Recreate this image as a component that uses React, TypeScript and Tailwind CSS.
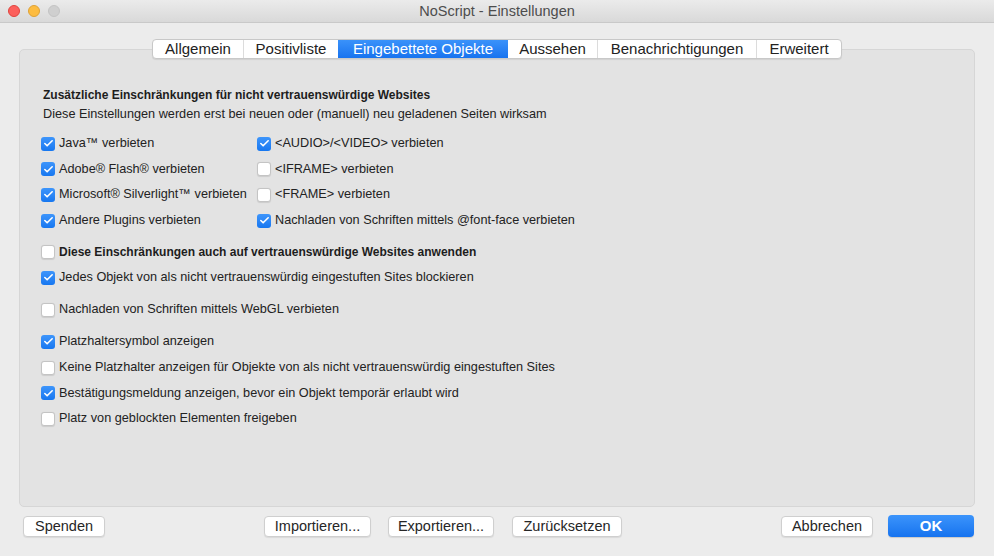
import { Check } from "lucide-react"

const font = { fontFamily: '"Liberation Sans", Arial, sans-serif' }

const tabs = [
  "Allgemein",
  "Positivliste",
  "Eingebettete Objekte",
  "Aussehen",
  "Benachrichtigungen",
  "Erweitert",
]
const tabWidths = ["w-[90px]", "w-[95px]", "w-[170px]", "w-[89px]", "w-[159px]", "w-[85px]"]

function Box({ checked }: { checked: boolean }) {
  return checked ? (
    <span className="flex h-[14px] w-[14px] shrink-0 items-center justify-center rounded-[3px] bg-gradient-to-b from-[#3d95fb] to-[#1677f0]">
      <Check className="h-[11px] w-[11px] text-white" strokeWidth={3.5} />
    </span>
  ) : (
    <span className="h-[14px] w-[14px] shrink-0 rounded-[3px] border border-[#c4c4c4] bg-white shadow-[0_0.5px_1px_rgba(0,0,0,0.1)]" />
  )
}

function Row({
  label,
  checked,
  bold,
  className,
}: {
  label: string
  checked: boolean
  bold?: boolean
  className?: string
}) {
  return (
    <div className={"flex h-[25.6px] items-center gap-[4px] " + (className ?? "")}>
      <Box checked={checked} />
      <span className={bold ? "text-[12px] font-bold text-[#1d1d1d]" : "text-[#222]"}>{label}</span>
    </div>
  )
}

function Button({ label, className }: { label: string; className?: string }) {
  return (
    <button
      className={
        "h-[21px] rounded-[4px] border border-[#cfcfcf] bg-white text-[14.5px] leading-[19px] text-[#262626] shadow-[0_1px_1px_rgba(0,0,0,0.08)] " +
        (className ?? "")
      }
    >
      {label}
    </button>
  )
}

export default function App() {
  return (
    <div className="flex h-[556px] w-[994px] flex-col bg-[#ececec] text-[12.7px]" style={font}>
      {/* title bar */}
      <div className="relative flex h-[23px] shrink-0 items-center justify-center border-b border-[#c9c9c9] bg-gradient-to-b from-[#ebebeb] to-[#d9d9d9]">
        <div className="absolute left-[8px] top-[5px] flex gap-[8px]">
          <span className="h-[12px] w-[12px] rounded-full border border-[#e0443e] bg-[#fc605c]" />
          <span className="h-[12px] w-[12px] rounded-full border border-[#dea236] bg-[#fdbc40]" />
          <span className="h-[12px] w-[12px] rounded-full border border-[#c4c4c4] bg-[#cfcfcf]" />
        </div>
        <span className="pt-[1px] text-[14.5px] text-[#4d4d4d]">NoScript - Einstellungen</span>
      </div>

      <div className="flex flex-1 flex-col px-[19px] pt-[16px]">
        {/* tabs */}
        <div className="relative z-10 flex justify-center">
          <div className="flex h-[20px] overflow-hidden rounded-[4px] border border-[#c8c8c8] bg-white text-[15px] shadow-[0_1px_1px_rgba(0,0,0,0.08)]">
            {tabs.map((t, i) => (
              <div
                key={t}
                className={
                  "flex items-center justify-center pt-[1px] " +
                  tabWidths[i] +
                  (i === 2
                    ? " bg-gradient-to-b from-[#3a92fa] to-[#1773ef] text-white"
                    : " text-[#222]") +
                  (i > 0 && i !== 2 && i !== 3 ? " border-l border-[#dcdcdc]" : "")
                }
              >
                {t}
              </div>
            ))}
          </div>
        </div>

        {/* panel */}
        <div className="-mt-[10px] flex h-[458px] flex-col rounded-[5px] border border-[#d6d6d6] bg-[#e3e3e3] pl-[21px] pt-[36px]">
          <div className="pl-[2px] text-[12px] font-bold leading-[19px] text-[#1d1d1d]">
            Zusätzliche Einschränkungen für nicht vertrauenswürdige Websites
          </div>
          <div className="pl-[2px] leading-[19px] text-[#222]">
            Diese Einstellungen werden erst bei neuen oder (manuell) neu geladenen Seiten wirksam
          </div>

          <div className="mt-[7px] grid grid-cols-[216px_1fr]">
            <Row label="Java™ verbieten" checked />
            <Row label="<AUDIO>/<VIDEO> verbieten" checked />
            <Row label="Adobe® Flash® verbieten" checked />
            <Row label="<IFRAME> verbieten" checked={false} />
            <Row label="Microsoft® Silverlight™ verbieten" checked />
            <Row label="<FRAME> verbieten" checked={false} />
            <Row label="Andere Plugins verbieten" checked />
            <Row label="Nachladen von Schriften mittels @font-face verbieten" checked />
          </div>

          <Row className="mt-[6px]" label="Diese Einschränkungen auch auf vertrauenswürdige Websites anwenden" checked={false} bold />
          <Row label="Jedes Objekt von als nicht vertrauenswürdig eingestuften Sites blockieren" checked />
          <Row className="mt-[6.5px]" label="Nachladen von Schriften mittels WebGL verbieten" checked={false} />
          <Row className="mt-[6.5px]" label="Platzhaltersymbol anzeigen" checked />
          <Row label="Keine Platzhalter anzeigen für Objekte von als nicht vertrauenswürdig eingestuften Sites" checked={false} />
          <Row label="Bestätigungsmeldung anzeigen, bevor ein Objekt temporär erlaubt wird" checked />
          <Row label="Platz von geblockten Elementen freigeben" checked={false} />
        </div>

        {/* buttons */}
        <div className="mt-[8px] flex items-center pl-[4px] pr-[1px]">
          <Button label="Spenden" className="w-[82px]" />
          <Button label="Importieren..." className="ml-[159px] w-[107px]" />
          <Button label="Exportieren..." className="ml-[17px] w-[106px]" />
          <Button label="Zurücksetzen" className="ml-[18px] w-[110px]" />
          <Button label="Abbrechen" className="ml-auto w-[92px]" />
          <button className="ml-[15px] h-[22px] w-[86px] rounded-[4px] bg-gradient-to-b from-[#3b94fb] to-[#1573ef] text-[15px] font-bold text-white shadow-[0_1px_1px_rgba(0,0,0,0.15)]">
            OK
          </button>
        </div>
      </div>
    </div>
  )
}
